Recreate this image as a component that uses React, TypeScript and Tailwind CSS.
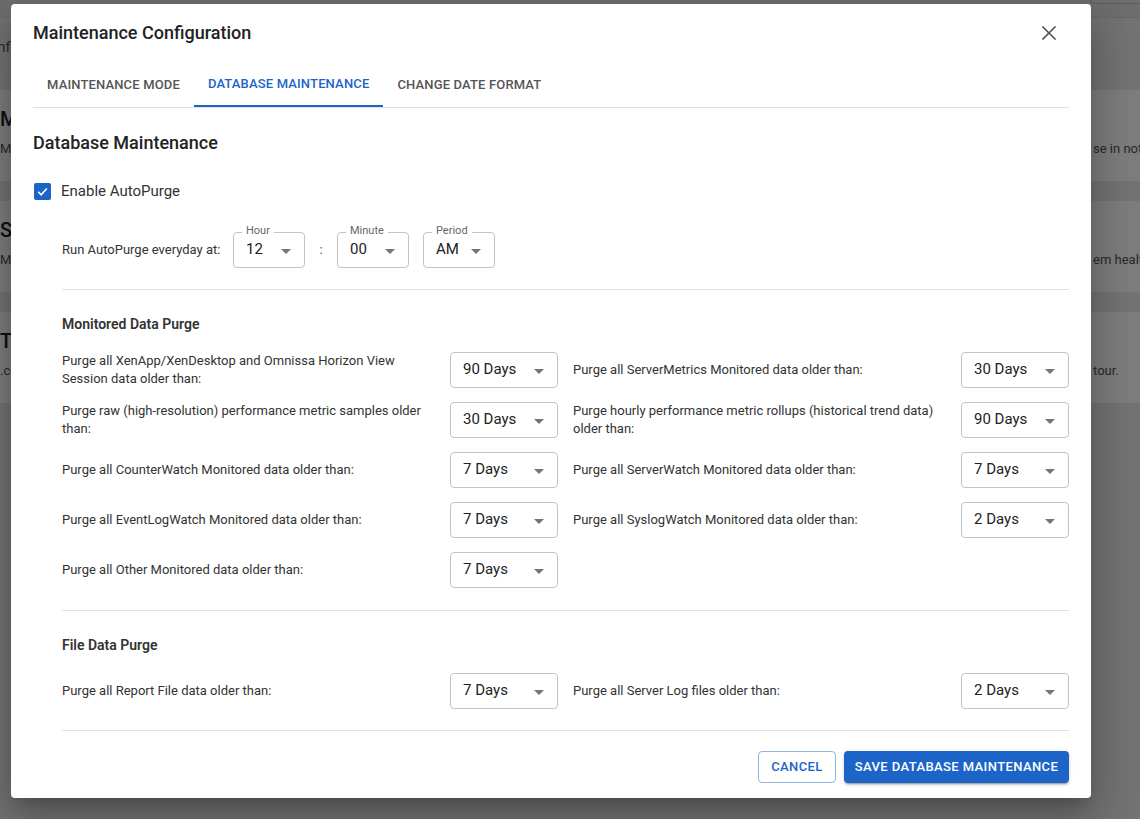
import React from 'react';

const BLUE = '#1d64c8';

const monitoredRows: { label: string; value: string }[][] = [
  [
    { label: 'Purge all XenApp/XenDesktop and Omnissa Horizon View Session data older than:', value: '90 Days' },
    { label: 'Purge all ServerMetrics Monitored data older than:', value: '30 Days' },
  ],
  [
    { label: 'Purge raw (high-resolution) performance metric samples older than:', value: '30 Days' },
    { label: 'Purge hourly performance metric rollups (historical trend data) older than:', value: '90 Days' },
  ],
  [
    { label: 'Purge all CounterWatch Monitored data older than:', value: '7 Days' },
    { label: 'Purge all ServerWatch Monitored data older than:', value: '7 Days' },
  ],
  [
    { label: 'Purge all EventLogWatch Monitored data older than:', value: '7 Days' },
    { label: 'Purge all SyslogWatch Monitored data older than:', value: '2 Days' },
  ],
  [{ label: 'Purge all Other Monitored data older than:', value: '7 Days' }],
];

const fileRows = [
  [
    { label: 'Purge all Report File data older than:', value: '7 Days' },
    { label: 'Purge all Server Log files older than:', value: '2 Days' },
  ],
];

const bgCards = [
  { title: 'Maintenance Mode', desc: 'Manage maintenance windows and pause alerts for the rest of the ', tail: 'se in notifications' },
  { title: 'Server Health', desc: 'Manage the database maintenance and the sys', tail: 'em health' },
  { title: 'Tour', desc: '.configure the guided product ', tail: 'tour.' },
];

function Caret() {
  return (
    <svg width="10" height="5" viewBox="0 0 10 5" className="absolute right-[13px] top-1/2 -translate-y-[1px]">
      <path d="M0 0 L5 5 L10 0 Z" fill="#757575" />
    </svg>
  );
}

function Select({ value, label, width }: { value: string; label?: string; width: string }) {
  return (
    <div className={`relative h-[36px] ${width} shrink-0 rounded-[4px] border border-[#c4c4c4] bg-white flex items-center pl-[12px]`}>
      {label && (
        <span className="absolute -top-[9px] left-[8px] bg-white px-[4px] text-[11px] leading-[14px] text-[#666]">{label}</span>
      )}
      <span className="-mt-[2px] text-[15px] text-[#222]">{value}</span>
      <Caret />
    </div>
  );
}

function PurgeGrid({ rows }: { rows: { label: string; value: string }[][] }) {
  return (
    <div className="flex flex-col gap-[14px]">
      {rows.map((row, i) => (
        <div key={i} className="grid grid-cols-[496px_496px] gap-x-[15px]">
          {row.map((item, j) => (
            <div key={j} className="flex items-center">
              <p className="flex-1 pr-[14px] text-[13px] leading-[18px] text-[#333]">{item.label}</p>
              <Select value={item.value} width="w-[108px]" />
            </div>
          ))}
        </div>
      ))}
    </div>
  );
}

export default function App() {
  return (
    <div className="relative h-[819px] w-[1140px] overflow-hidden bg-[#e6e6e6] font-['Roboto',sans-serif]">
      {/* page behind the dialog */}
      <div className="h-[18px] bg-[#dcdcdc] border-b border-[#d0d0d0] flex justify-end">
        <div className="mr-[-10px] mt-[-10px] h-[14px] w-[60px] rounded-[4px] border border-[#bbb]" />
      </div>
      <div className="h-[72px] flex items-start pt-[18px]">
        <span className="-ml-[21px] text-[15px] text-[#555]">Configuration</span>
      </div>
      <div className="flex flex-col gap-[20px]">
        {bgCards.map((c, i) => (
          <div key={i} className="h-[91px] bg-[#fafafa] pt-[17px]">
            <div className="text-[20px] font-medium text-[#222] leading-[24px]">{c.title}</div>
            <div className="mt-[9px] grid grid-cols-[1093px_1fr] text-[13px] leading-[18px] text-[#555] whitespace-nowrap">
              <span className="overflow-hidden">{c.desc}</span>
              <span>{c.tail}</span>
            </div>
          </div>
        ))}
      </div>

      {/* backdrop */}
      <div className="absolute inset-0 bg-black/50" />

      {/* dialog */}
      <div className="absolute left-[11px] top-[4px] w-[1080px] rounded-[4px] bg-white px-[22px] pb-[15px] shadow-[0_11px_15px_-7px_rgba(0,0,0,0.2),0_24px_38px_3px_rgba(0,0,0,0.14),0_9px_46px_8px_rgba(0,0,0,0.12)]">
        <div className="h-[58px] flex items-center justify-between">
          <h2 className="text-[18px] font-medium leading-[24px] text-[#222]">Maintenance Configuration</h2>
          <button className="mr-[8px] flex h-[24px] w-[24px] items-center justify-center">
            <svg width="14" height="14" viewBox="0 0 14 14">
              <path d="M1 1 L13 13 M13 1 L1 13" stroke="#555" strokeWidth="1.6" strokeLinecap="square" />
            </svg>
          </button>
        </div>

        <div className="flex border-b border-[#e0e0e0]">
          <div className="h-[45px] px-[14px] flex items-center text-[13px] font-medium tracking-[0.15px] text-[#555]">MAINTENANCE MODE</div>
          <div className="h-[45px] -mb-px border-b-2 px-[14px] flex items-center text-[13px] font-medium tracking-[0.15px]" style={{ color: BLUE, borderColor: BLUE }}>
            DATABASE MAINTENANCE
          </div>
          <div className="h-[45px] px-[14px] flex items-center text-[13px] font-medium tracking-[0.15px] text-[#555]">CHANGE DATE FORMAT</div>
        </div>

        <h3 className="mt-[23px] text-[18px] font-medium leading-[24px] text-[#222]">Database Maintenance</h3>

        <div className="mt-[24px] flex h-[24px] items-center">
          <div className="ml-[1px] flex h-[17px] w-[17px] items-center justify-center rounded-[2px] bg-[#1d64c8]">
            <svg width="13" height="13" viewBox="0 0 24 24">
              <path d="M4 12.5 L9.5 18 L20 6.5" fill="none" stroke="#fff" strokeWidth="3" />
            </svg>
          </div>
          <span className="ml-[10px] text-[15px] text-[#333]">Enable AutoPurge</span>
        </div>

        <div className="mt-[29px] ml-[29px] flex items-center">
          <span className="w-[171px] shrink-0 whitespace-nowrap text-[13px] text-[#333]">Run AutoPurge everyday at:</span>
          <Select value="12" label="Hour" width="w-[72px]" />
          <span className="w-[32px] text-center text-[13px] text-[#555]">:</span>
          <Select value="00" label="Minute" width="w-[72px]" />
          <div className="w-[14px]" />
          <Select value="AM" label="Period" width="w-[72px]" />
        </div>

        <div className="ml-[29px]">
          <div className="mt-[21px] border-t border-[#e0e0e0]" />

          <h4 className="mt-[24px] text-[14px] font-semibold leading-[20px] text-[#333]">Monitored Data Purge</h4>
          <div className="mt-[18px]">
            <PurgeGrid rows={monitoredRows} />
          </div>

          <div className="mt-[22px] border-t border-[#e0e0e0]" />

          <h4 className="mt-[24px] text-[14px] font-semibold leading-[20px] text-[#333]">File Data Purge</h4>
          <div className="mt-[18px]">
            <PurgeGrid rows={fileRows} />
          </div>

          <div className="mt-[21px] border-t border-[#e0e0e0]" />
        </div>

        <div className="mt-[20px] flex justify-end gap-[8px]">
          <button className="h-[32px] w-[78px] rounded-[4px] border border-[#8fb4e6] text-[13px] font-medium tracking-[0.4px]" style={{ color: BLUE }}>
            CANCEL
          </button>
          <button className="h-[32px] w-[225px] rounded-[4px] bg-[#1d64c8] text-[13px] font-medium tracking-[0.4px] text-white shadow-[0_3px_1px_-2px_rgba(0,0,0,0.2),0_2px_2px_0_rgba(0,0,0,0.14),0_1px_5px_0_rgba(0,0,0,0.12)]">
            SAVE DATABASE MAINTENANCE
          </button>
        </div>
      </div>
    </div>
  );
}
